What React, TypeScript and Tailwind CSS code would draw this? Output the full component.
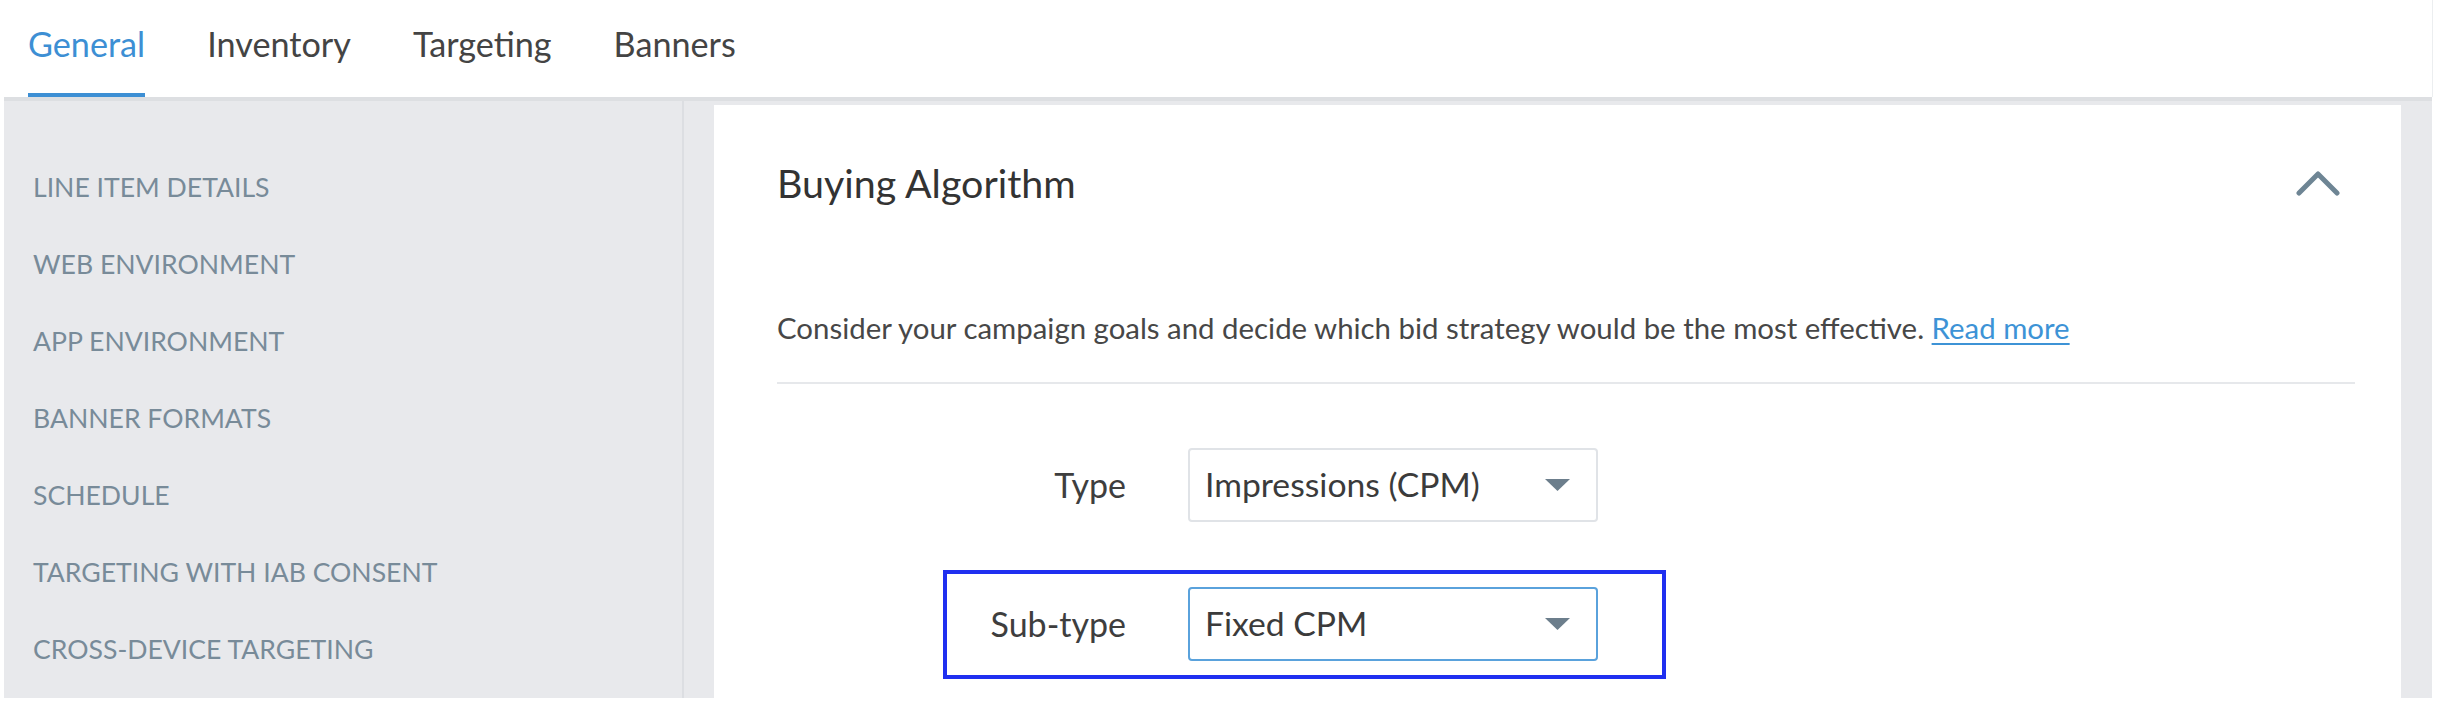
import React from "react";

const tabs = ["General", "Inventory", "Targeting", "Banners"];

const sections = [
  "LINE ITEM DETAILS",
  "WEB ENVIRONMENT",
  "APP ENVIRONMENT",
  "BANNER FORMATS",
  "SCHEDULE",
  "TARGETING WITH IAB CONSENT",
  "CROSS-DEVICE TARGETING",
];

function Caret() {
  return (
    <svg width="25" height="12" viewBox="0 0 25 12" className="shrink-0">
      <path d="M0 0 L25 0 L12.5 12 Z" fill="#6c7e8c" />
    </svg>
  );
}

function Select({ value, focused }: { value: string; focused?: boolean }) {
  return (
    <div
      className={`w-[410px] h-[74px] shrink-0 flex items-center justify-between pl-[15px] pr-[26px] rounded-[4px] bg-white border-2 ${
        focused ? "border-[#5aa2dc]" : "border-[#e0e3e7]"
      }`}
    >
      <span className="text-[33.7px] leading-none text-[#3b3b3b]">{value}</span>
      <Caret />
    </div>
  );
}

export default function App() {
  return (
    <div className="w-[2446px] h-[716px] bg-white overflow-hidden flex flex-col font-['Lato','Open_Sans',sans-serif]">
      {/* tabs */}
      <div className="h-[97px] shrink-0 flex items-stretch pl-[28px] gap-[62px] mr-[13px] border-r border-[#eceef0]">
        {tabs.map((tab, i) => (
          <div
            key={tab}
            className={`flex items-center pb-[5px] border-b-[4px] text-[34.2px] leading-none ${
              i === 0
                ? "border-[#3d8fd4] text-[#3d8fd4]"
                : "border-transparent text-[#444444]"
            }`}
          >
            {tab}
          </div>
        ))}
      </div>

      <div className="flex-1 flex pl-[4px] pr-[14px] pb-[18px]">
        <div className="flex-1 flex bg-[#e8e9ec] border-t-[4px] border-[#dddfe2]">
          {/* side nav */}
          <div className="w-[680px] shrink-0 border-r-2 border-[#dcdee2] pt-[48px] pl-[29px]">
            {sections.map((s) => (
              <div key={s} className="text-[26.6px] leading-[77px] text-[#788b99]">
                {s}
              </div>
            ))}
          </div>

          {/* card */}
          <div className="flex-1 ml-[30px] mr-[31px] mt-[4px] -mb-[18px] bg-white pl-[63px] pr-[46px] pt-[58px]">
            <div className="flex items-center justify-between">
              <h2 className="text-[39.4px] leading-none text-[#333333]">Buying Algorithm</h2>
              <svg width="44" height="26" viewBox="0 0 44 26" className="mr-[15px]">
                <path
                  d="M3 23 L22 4 L41 23"
                  fill="none"
                  stroke="#6e8594"
                  strokeWidth="5"
                  strokeLinecap="round"
                  strokeLinejoin="round"
                />
              </svg>
            </div>

            <p className="mt-[111px] text-[29.4px] leading-none text-[#474747]">
              Consider your campaign goals and decide which bid strategy would be the most effective.{" "}
              <a className="text-[#3d93d6] underline underline-offset-4">Read more</a>
            </p>

            <div className="mt-[39px] h-[2px] bg-[#e6e8eb]" />

            <div className="mt-[64px] flex items-center">
              <div className="w-[349px] text-right text-[34px] leading-none text-[#3e3e3e]">Type</div>
              <div className="ml-[62px]">
                <Select value="Impressions (CPM)" />
              </div>
            </div>

            <div className="mt-[48px] ml-[166px] w-[723px] h-[109px] border-[4px] border-[#1f2ff0] flex items-center">
              <div className="w-[179px] text-right text-[34px] leading-none text-[#3e3e3e]">Sub-type</div>
              <div className="ml-[62px]">
                <Select value="Fixed CPM" focused />
              </div>
            </div>
          </div>
        </div>
      </div>
    </div>
  );
}
